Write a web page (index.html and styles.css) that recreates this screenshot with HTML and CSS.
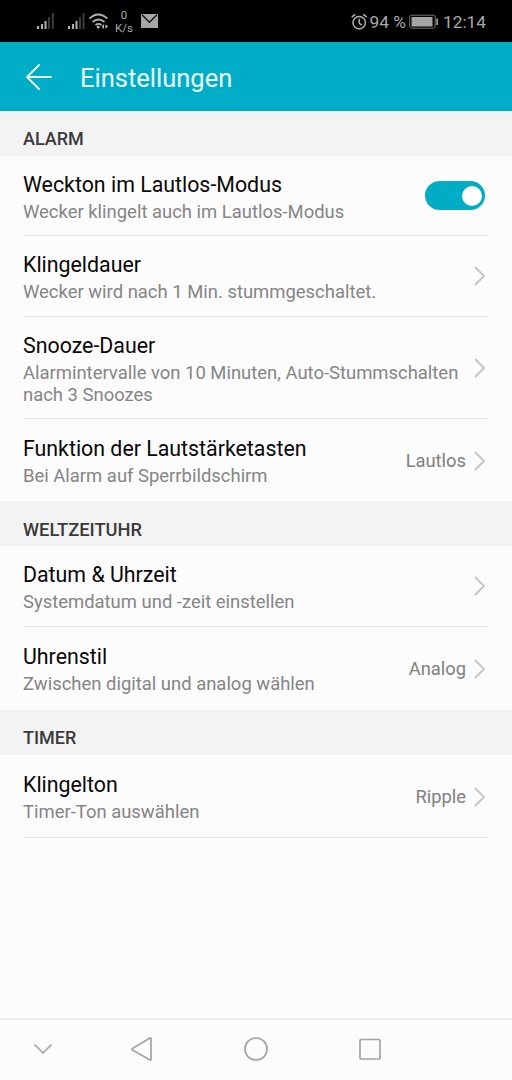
FILE: index.html
```html
<!DOCTYPE html>
<html lang="de">
<head>
<meta charset="utf-8">
<title>Einstellungen</title>
<link rel="stylesheet" href="styles.css">
</head>
<body>
<div class="screen">
  <div class="status">
    <svg class="status-icons" width="108" height="42" viewBox="0 0 108 42">
      <g fill="#b4b4b4">
        <path d="M0 26h2v3H0zM4 24h2v5H4zM7.500 21h2v8h-2z"/>
        <path d="M31 26h2v3h-2zM35 24h2v5h-2zM38.500 21h2v8h-2z"/>
      </g>
      <path fill="#3c3c3c" d="M11 17h2v12h-2zM14.800 13h2v16h-2zM42 17h2v12h-2zM45.500 13h2v16h-2z"/>
      <g fill="none" stroke="#b4b4b4" stroke-width="1.700">
        <path d="M52.500 18.500q8.800-8 17.800 0M55.500 22q6-5 12 0M58.500 25q3-2.300 6 0"/>
      </g>
      <circle cx="61.200" cy="27" r="1.500" fill="#b4b4b4"/>
      <path fill="#b4b4b4" d="M67 24v5l-2.500-2.500zM68.500 24v5l2.500-2.500z"/>
    </svg>
    <div class="speed"><span>0</span><span>K/s</span></div>
    <svg class="mail" width="17" height="14" viewBox="0 0 17 14"><path fill="#a6a6a6" d="M0 0h17v14H0z"/><path d="M1 .8l7.500 7.500L16 .8" fill="none" stroke="#111" stroke-width="1.300"/></svg>
    <div class="status-right">
      <svg width="17" height="18" viewBox="0 0 17 18" fill="none" stroke="#b0b0b0" stroke-width="1.500"><circle cx="8.200" cy="9.700" r="6.200"/><path d="M8.200 5.800v4.300l2.500 2M.7 4.200L4.200 1.300M12.300 1.300l3.500 2.900"/></svg>
      <span class="percent">94 %</span>
      <svg class="battery" width="30" height="16" viewBox="0 0 30 16"><rect x=".7" y="1.200" width="25.500" height="13" rx="2" fill="none" stroke="#777"/><path fill="#a5a5a5" d="M2.500 3h21v9.500h-21z"/><path fill="#999" d="M27.300 4.500h1.700v6.500h-1.700z"/></svg>
      <span class="clock">12:14</span>
    </div>
  </div>
  <header class="header">
    <svg width="26" height="26" viewBox="0 0 26 26" fill="none" stroke="#effcff" stroke-width="1.800" stroke-linecap="round" stroke-linejoin="round"><path d="M25 13H1M13 1L1 13l12 12"/></svg>
    <h1>Einstellungen</h1>
  </header>

  <h2 class="section">ALARM</h2>
  <div class="row first">
    <div class="text"><div class="title">Weckton im Lautlos-Modus</div><div class="sub">Wecker klingelt auch im Lautlos-Modus</div></div>
    <div class="switch"><div class="knob"></div></div>
  </div>
  <div class="row second">
    <div class="text"><div class="title">Klingeldauer</div><div class="sub">Wecker wird nach 1 Min. stummgeschaltet.</div></div>
    <svg class="chevron" viewBox="0 0 12 20"><path d="M1.500 1.500L10 10l-8.500 8.500"/></svg>
  </div>
  <div class="row tall">
    <div class="text"><div class="title">Snooze-Dauer</div><div class="sub">Alarmintervalle von 10 Minuten, Auto-Stummschalten<br>nach 3 Snoozes</div></div>
    <svg class="chevron" viewBox="0 0 12 20"><path d="M1.500 1.500L10 10l-8.500 8.500"/></svg>
  </div>
  <div class="row last">
    <div class="text"><div class="title">Funktion der Lautstärketasten</div><div class="sub">Bei Alarm auf Sperrbildschirm</div></div>
    <span class="value">Lautlos</span>
    <svg class="chevron" viewBox="0 0 12 20"><path d="M1.500 1.500L10 10l-8.500 8.500"/></svg>
  </div>

  <h2 class="section wide">WELTZEITUHR</h2>
  <div class="row date">
    <div class="text"><div class="title">Datum &amp; Uhrzeit</div><div class="sub">Systemdatum und -zeit einstellen</div></div>
    <svg class="chevron" viewBox="0 0 12 20"><path d="M1.500 1.500L10 10l-8.500 8.500"/></svg>
  </div>
  <div class="row last style">
    <div class="text"><div class="title">Uhrenstil</div><div class="sub">Zwischen digital und analog wählen</div></div>
    <span class="value">Analog</span>
    <svg class="chevron" viewBox="0 0 12 20"><path d="M1.500 1.500L10 10l-8.500 8.500"/></svg>
  </div>

  <h2 class="section">TIMER</h2>
  <div class="row end">
    <div class="text"><div class="title">Klingelton</div><div class="sub">Timer-Ton auswählen</div></div>
    <span class="value">Ripple</span>
    <svg class="chevron" viewBox="0 0 12 20"><path d="M1.500 1.500L10 10l-8.500 8.500"/></svg>
  </div>

  <nav class="nav">
    <svg class="nav-hide" viewBox="0 0 26 26"><path d="M5 9l8 8 8-8"/></svg>
    <svg viewBox="0 0 26 26"><path d="M22 2.500v21q0 1-1 .5L3.500 14q-1-.8 0-1.500L21 2q1-.5 1 .5z"/></svg>
    <svg viewBox="0 0 26 26"><circle cx="13" cy="13" r="11"/></svg>
    <svg viewBox="0 0 26 26"><rect x="3" y="3.500" width="20" height="19.500" rx="1"/></svg>
  </nav>
</div>
</body>
</html>
```
FILE: styles.css
```css
* { box-sizing: border-box; }
body { margin: 0; font-family: Roboto, "Liberation Sans", sans-serif; background: #fcfcfc; }
.screen { display: flex; flex-direction: column; width: 512px; height: 1080px; overflow: hidden; }
.status { display: flex; align-items: center; flex: none; height: 42px; padding: 0 26px 0 37px; background: #000; color: #a8a8a8; }
.status-icons { width: 108px; flex: none; margin-right: -31px; }
.speed { display: flex; flex-direction: column; align-items: center; width: 20px; margin-top: 2px; font-size: 11.5px; line-height: 13px; }
.mail { margin-left: 7px; }
.status-right { display: flex; align-items: center; margin-left: auto; font-size: 17.3px; line-height: 22px; padding-top: 2px; }
.percent { margin-left: 2px; }
.battery { margin-left: 3px; }
.clock { margin-left: 4px; }
.header { display: flex; align-items: center; gap: 28px; flex: none; height: 69px; padding: 0 26px; background: #00adc6; color: #effcff; }
.header h1 { margin: 2px 0 0; font-size: 25.5px; line-height: 34px; font-weight: 400; }
.section { flex: none; height: 45px; margin: 0; padding: 16px 23px 0; background: #f3f3f3; color: #3a3a3a; font-size: 18px; line-height: 23px; font-weight: 500; }
.wide { padding-top: 17px; font-size: 18.3px; }
.row { display: flex; align-items: center; flex: none; height: 81px; margin: 0 23px; border-bottom: 1px solid #e4e4e4; }
.first { height: 80px; }
.first .text { padding-top: 3px; }
.second .text, .date .text { padding-top: 2px; }
.tall { height: 102px; }
.tall .text { padding-top: 4px; }
.last { height: 82px; border-bottom: 0; padding-top: 2px; }
.style { height: 83px; padding-top: 1px; }
.end { height: 83px; }
.end .text { padding-top: 2px; }
.end .value, .end .chevron { margin-top: 1px; }
.text { flex: 1; white-space: nowrap; }
.title { margin-bottom: 3px; color: #080808; font-size: 21.35px; line-height: 26px; }
.sub { color: #858585; font-size: 18.45px; line-height: 22px; }
.value { color: #808080; font-size: 18.35px; line-height: 22px; }
.chevron { width: 12px; height: 20px; margin: 0 3px 0 8px; fill: none; stroke: #c4c4c4; stroke-width: 1.800; stroke-linecap: round; }
.switch { display: flex; justify-content: flex-end; align-items: center; width: 60px; height: 29px; margin-right: 4px; padding-right: 3px; border-radius: 15px; background: #00adc4; }
.knob { width: 20px; height: 20px; border-radius: 50%; background: #fff; }
.nav { display: flex; align-items: center; gap: 87.700px; height: 62px; flex: none; margin-top: auto; padding: 0 0 2px 29.500px; border-top: 2px solid #ececec; }
.nav svg { width: 26px; height: 26px; flex: none; fill: none; stroke: #a4a4a4; stroke-width: 1.700; stroke-linecap: round; stroke-linejoin: round; }
.nav .nav-hide { margin-right: -14px; }
```
